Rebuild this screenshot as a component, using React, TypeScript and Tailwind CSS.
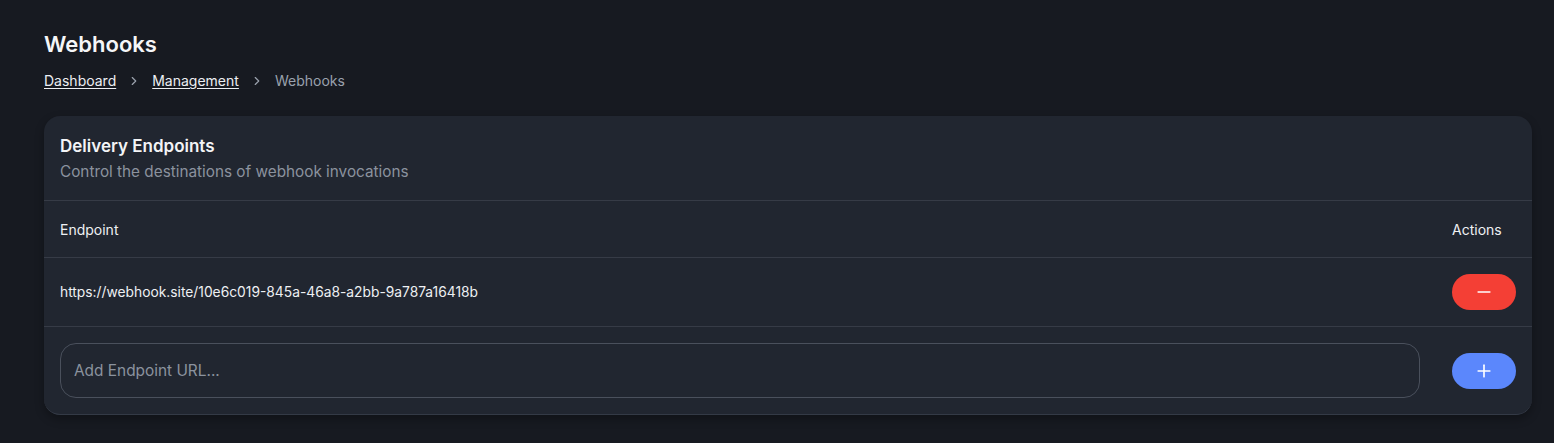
import { Minus, Plus, ChevronRight } from "lucide-react";

const endpoints = ["https://webhook.site/10e6c019-845a-46a8-a2bb-9a787a16418b"];

export default function App() {
	return (
		<div className="min-h-screen w-full bg-[#171a21] pl-[44px] pr-[22px] pt-[30px] pb-6 font-['Inter',sans-serif] text-white">
			<h1 className="text-[22px] font-semibold leading-7 text-[#f5f6f8]">Webhooks</h1>
			<nav className="mt-[13px] flex items-center gap-[11px] text-[14px] leading-5">
				<a className="text-[#eceef2] underline underline-offset-2">Dashboard</a>
				<ChevronRight size={14} className="text-[#9aa1ad]" strokeWidth={2} />
				<a className="text-[#eceef2] underline underline-offset-2">Management</a>
				<ChevronRight size={14} className="text-[#9aa1ad]" strokeWidth={2} />
				<span className="text-[#9aa1ad]">Webhooks</span>
			</nav>

			<div className="mt-[25px] overflow-hidden rounded-2xl border-b border-[#343a46] bg-[#212630] shadow-[0_4px_10px_rgba(0,0,0,0.3)]">
				<div className="px-4 pt-[18px] pb-4">
					<h2 className="text-[17px] font-semibold leading-6 text-[#f3f4f6]">Delivery Endpoints</h2>
					<p className="mt-[2px] text-[15.3px] leading-6 text-[#8b929e]">
						Control the destinations of webhook invocations
					</p>
				</div>

				<div className="flex h-[57px] items-center border-t border-[#363b46] px-4 text-[14px] text-[#eef0f3]">
					<div className="flex-1">Endpoint</div>
					<div className="w-16">Actions</div>
				</div>

				{endpoints.map((url) => (
					<div
						key={url}
						className="flex h-[69px] items-center border-t border-[#363b46] px-4 text-[13.8px] text-[#eef0f3]"
					>
						<div className="flex-1">{url}</div>
						<button className="flex h-9 w-16 items-center justify-center rounded-full bg-[#f43f35] text-white">
							<Minus size={20} strokeWidth={2} />
						</button>
					</div>
				))}

				<div className="flex items-center gap-8 border-t border-[#363b46] px-4 pt-4 pb-4">
					<input
						placeholder="Add Endpoint URL..."
						className="h-[55px] flex-1 rounded-2xl border border-[#4a505c] bg-transparent px-[13px] text-[15.4px] text-white placeholder:text-[#8b929e] outline-none"
					/>
					<button className="flex h-9 w-16 items-center justify-center rounded-full bg-[#5b87fc] text-white">
						<Plus size={20} strokeWidth={2} />
					</button>
				</div>
			</div>
		</div>
	);
}
